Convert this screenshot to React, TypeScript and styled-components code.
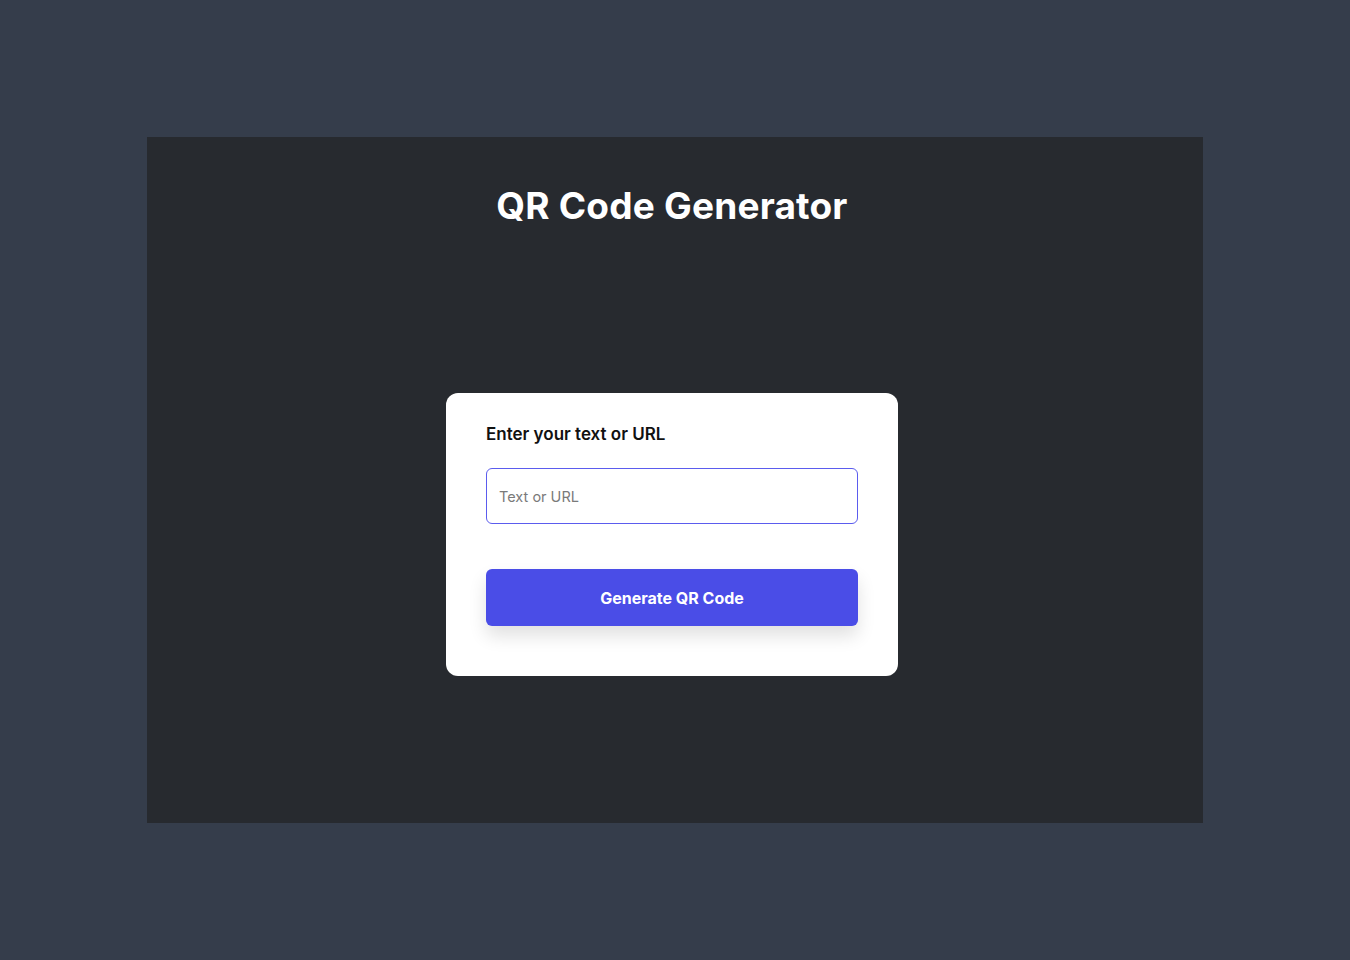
import React from "react";
import styled, { createGlobalStyle } from "styled-components";

const Global = createGlobalStyle`
  html, body { margin: 0; padding: 0; }
  body {
    background: #353d4b;
    font-family: "Inter", "Liberation Sans", sans-serif;
  }
  * { box-sizing: border-box; }
`;

const Page = styled.div`
  min-height: 960px;
  padding: 137px 147px;
`;

const Panel = styled.main`
  height: 686px;
  background: #272a2f;
  display: flex;
  flex-direction: column;
  align-items: center;
  padding: 39px 6px 0 0;
`;

const Title = styled.h1`
  margin: 0;
  color: #ffffff;
  font-size: 37px;
  font-weight: 700;
  line-height: 60px;
  letter-spacing: 0.2px;
`;

const Card = styled.section`
  margin-top: 157px;
  width: 452px;
  background: #ffffff;
  border-radius: 12px;
  padding: 28px 40px 50px;
  display: flex;
  flex-direction: column;
`;

const Label = styled.label`
  color: #111111;
  font-size: 17px;
  font-weight: 600;
  line-height: 26px;
  margin-bottom: 21px;
`;

const Input = styled.input`
  height: 56px;
  width: 100%;
  border: 1px solid #5b5cee;
  border-radius: 6px;
  padding: 0 12px;
  font-family: inherit;
  font-size: 14.5px;
  color: #222;
  outline: none;
  &::placeholder { color: #7a7a7a; }
`;

const Button = styled.button`
  margin-top: 45px;
  height: 57px;
  width: 100%;
  border: none;
  border-radius: 6px;
  background: #4a4de7;
  color: #ffffff;
  font-family: inherit;
  font-size: 16px;
  font-weight: 700;
  cursor: pointer;
  box-shadow: 0 10px 18px rgba(0, 0, 0, 0.12);
`;

export default function App() {
  return (
    <>
      <Global />
      <Page>
        <Panel>
          <Title>QR Code Generator</Title>
          <Card>
            <Label htmlFor="qr-text">Enter your text or URL</Label>
            <Input id="qr-text" type="text" placeholder="Text or URL" />
            <Button type="button">Generate QR Code</Button>
          </Card>
        </Panel>
      </Page>
    </>
  );
}
